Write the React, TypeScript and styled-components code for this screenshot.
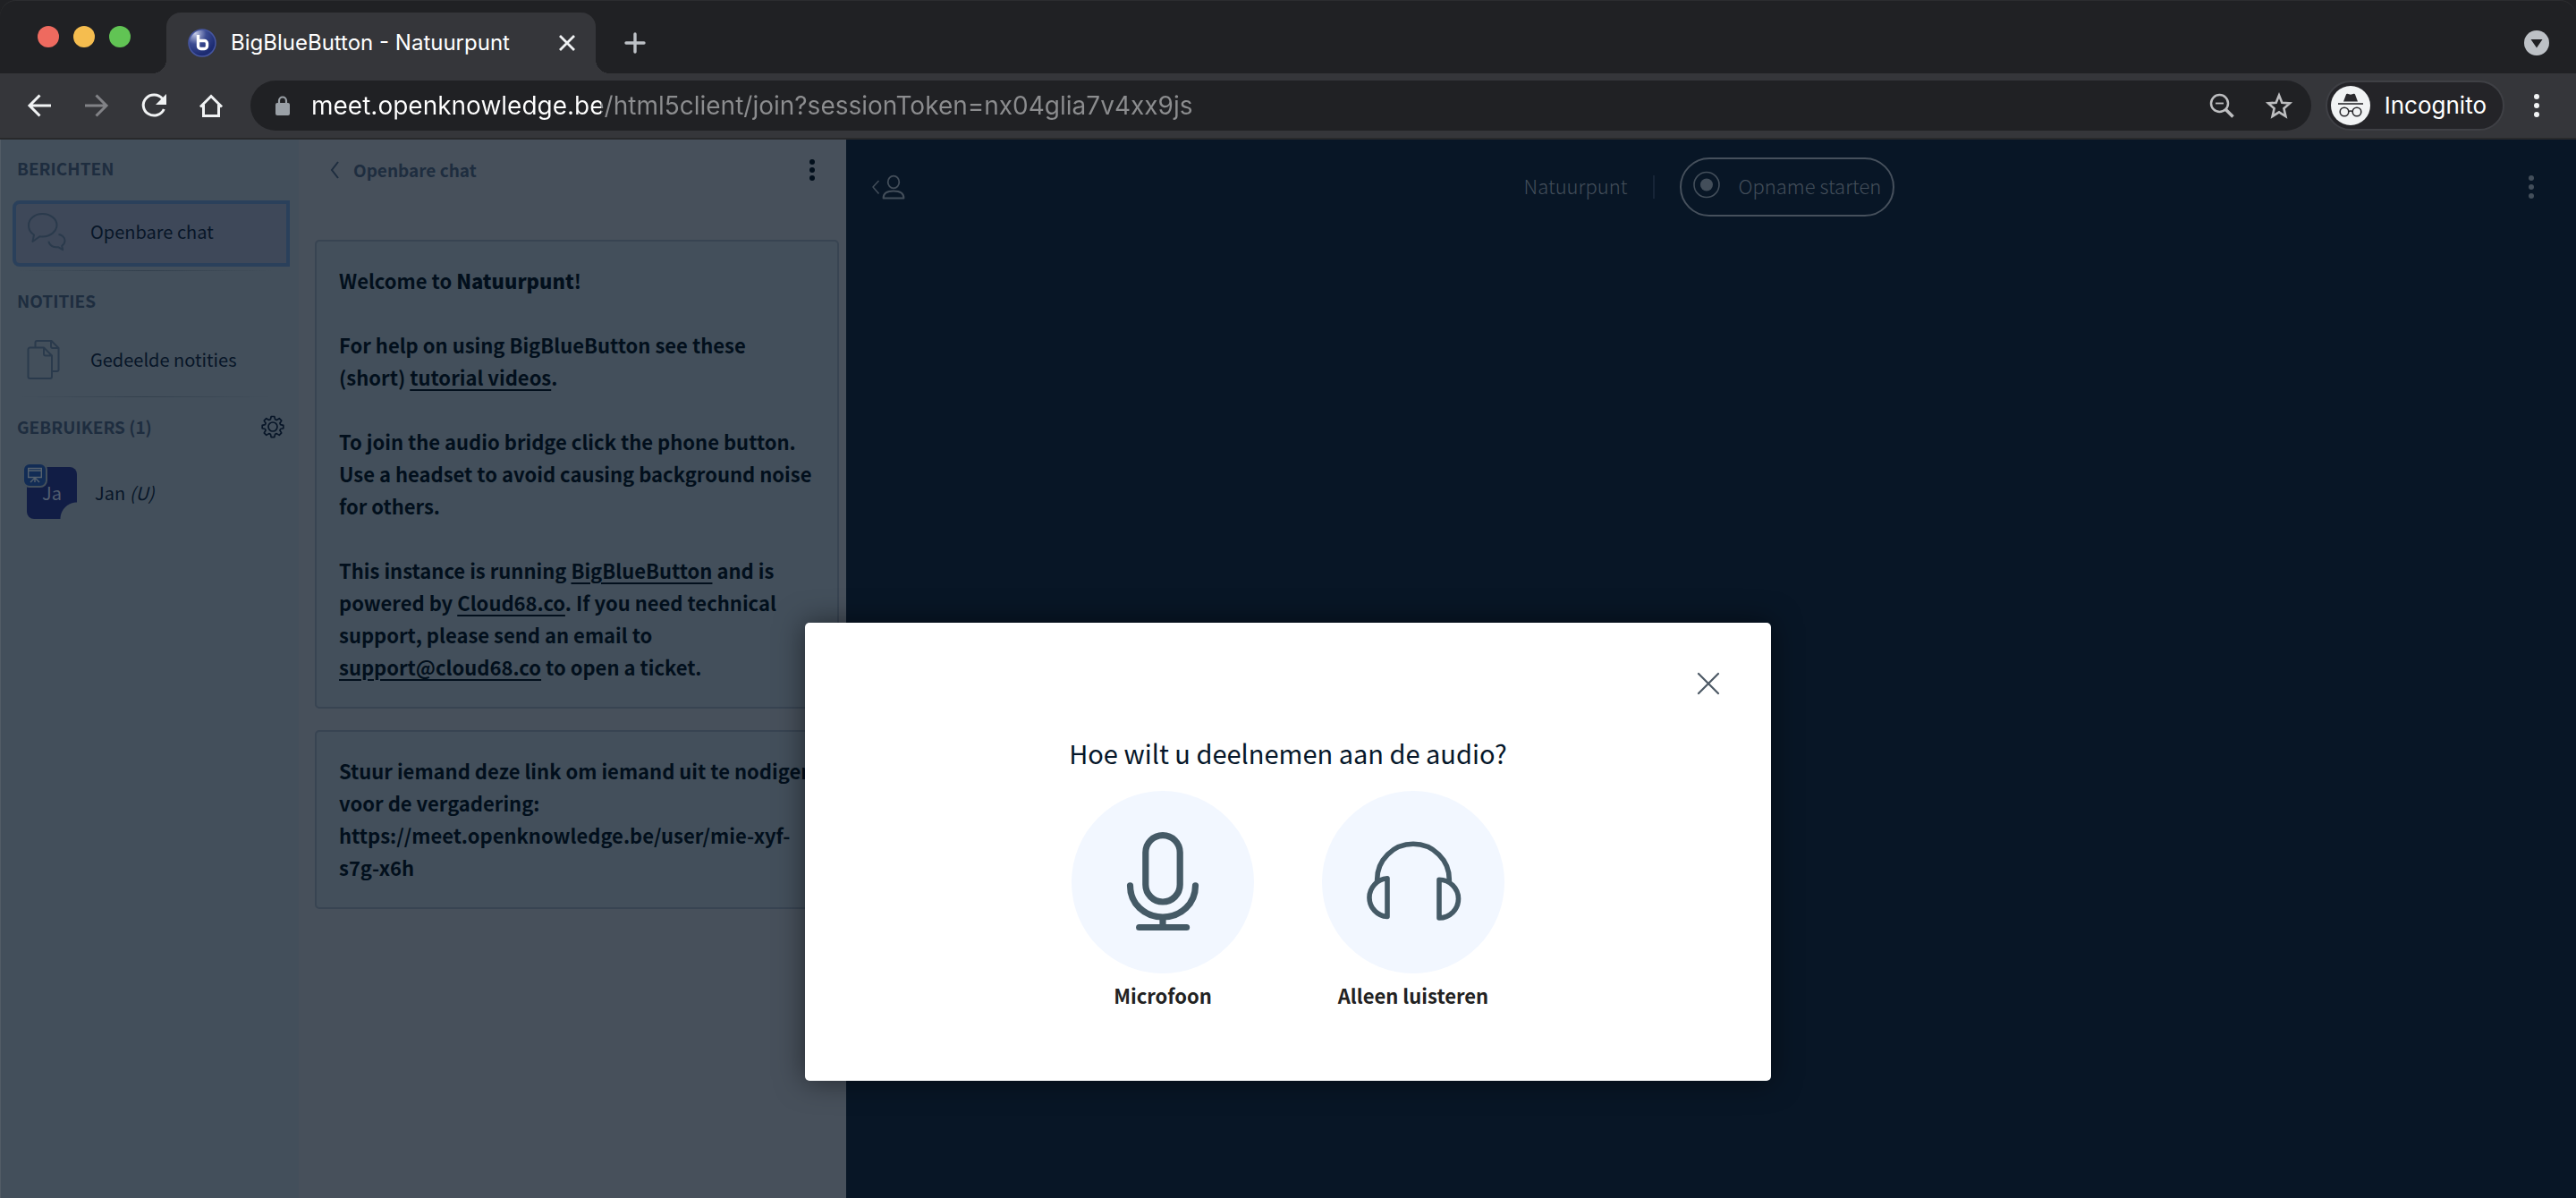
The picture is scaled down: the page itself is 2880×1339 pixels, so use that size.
import React from 'react';
import styled, { createGlobalStyle, css } from 'styled-components';

const sans = `"Noto Sans CJK SC", "Noto Sans", sans-serif`;
const chromeFont = `Inter, Roboto, sans-serif`;

const GlobalStyle = createGlobalStyle`
  *, *::before, *::after { box-sizing: border-box; }
  body { margin: 0; background: #202124; font-family: ${sans}; }
  button, input { font: inherit; color: inherit; }
  h1, h2, p { margin: 0; font-weight: inherit; }
  svg { display: block; flex: none; }
`;

const plainButton = css`
  display: flex;
  align-items: center;
  justify-content: center;
  padding: 0;
  border: 0;
  background: none;
  cursor: pointer;
`;

const Window = styled.div`
  display: flex;
  flex-direction: column;
  min-height: 100vh;
  overflow: hidden;
`;

/* ---------- browser chrome ---------- */

const TabStrip = styled.header`
  display: flex;
  align-items: stretch;
  height: 82px;
  padding: 14px 30px 0 42px;
  background: #202124;
  border-radius: 18px 18px 0 0;
  box-shadow: inset 0 1px 0 #2c2d30;
`;

const TrafficLights = styled.div`
  display: flex;
  gap: 16px;
  width: 144px;
  padding-top: 15px;
`;

const Light = styled.button<{ $color: string }>`
  ${plainButton}
  width: 24px;
  height: 24px;
  border-radius: 50%;
  background: ${(p) => p.$color};
`;

const Tab = styled.div`
  position: relative;
  display: flex;
  align-items: center;
  width: 480px;
  padding: 0 22px 0 24px;
  border-radius: 16px 16px 0 0;
  background: #35363a;
  color: #fff;

  &::before, &::after {
    content: '';
    position: absolute;
    bottom: 0;
    width: 16px;
    height: 16px;
  }
  &::before {
    right: 100%;
    background: radial-gradient(circle at 0 0, transparent 16px, #35363a 16px);
  }
  &::after {
    left: 100%;
    background: radial-gradient(circle at 100% 0, transparent 16px, #35363a 16px);
  }
`;

const TabTitle = styled.span`
  flex: 1;
  margin-left: 16px;
  font: 400 24px/32px ${chromeFont};
  white-space: nowrap;
`;

const IconButton = styled.button<{ $size?: number; $color?: string }>`
  ${plainButton}
  width: ${(p) => p.$size ?? 32}px;
  height: ${(p) => p.$size ?? 32}px;
  color: ${(p) => p.$color ?? '#f1f3f4'};
`;

const NewTab = styled(IconButton)`
  align-self: center;
  margin: 0 auto 0 28px;
`;

const TabSearch = styled(IconButton)`
  align-self: center;
`;

const Toolbar = styled.div`
  display: flex;
  align-items: center;
  height: 74px;
  padding: 0 28px;
  background: #35363a;
  border-bottom: 2px solid #28292b;
`;

const NavButtons = styled.nav`
  display: flex;
  gap: 32px;
  margin-right: 28px;
`;

const Omnibox = styled.form`
  flex: 1;
  display: flex;
  align-items: center;
  height: 56px;
  padding: 0 20px 0 24px;
  border-radius: 28px;
  background: #202124;
`;

const UrlInput = styled.input`
  flex: 1;
  height: 56px;
  margin-left: 20px;
  padding: 0;
  border: 0;
  outline: 0;
  font: 400 28px/56px ${chromeFont};
  color: #fff;
  background: linear-gradient(to right, #fff 324px, #8c8d8f 324px);
  -webkit-background-clip: text;
  background-clip: text;
  -webkit-text-fill-color: transparent;
`;

const OmniActions = styled.div`
  display: flex;
  gap: 32px;
`;

const IncognitoPill = styled.button`
  ${plainButton}
  gap: 16px;
  height: 56px;
  margin: 0 20px 0 16px;
  padding: 0 18px 0 4px;
  border: 2px solid #3f4045;
  border-radius: 28px;
  background: #242428;
  font: 400 26px/32px ${chromeFont};
  color: #fff;
`;

/* ---------- meeting ---------- */

const Page = styled.main`
  position: relative;
  flex: 1;
  display: grid;
  grid-template-columns: 334px 612px 1fr;
  background: #081626;
`;

const UserPanel = styled.aside`
  padding: 16px 10px 0 13px;
  border-left: 1px solid #525c66;
  background: #434f5b;
  color: #081628;
`;

const Section = styled.section<{ $divider?: boolean }>`
  padding-bottom: 17px;

  &::after {
    content: '';
    display: ${(p) => (p.$divider ? 'block' : 'none')};
    height: 1px;
    margin: 4px 20px 0 6px;
    background: linear-gradient(to right, transparent, #33404d, transparent);
  }
`;

const SectionHead = styled.div`
  display: flex;
  align-items: center;
  justify-content: space-between;
  height: 32px;
  padding: 0 6px 0 5px;
  color: #1e2d3f;
`;

const SectionTitle = styled.h2`
  font: 700 19px/32px ${sans};
`;

const ListItem = styled.button<{ $active?: boolean }>`
  ${plainButton}
  justify-content: flex-start;
  width: 310px;
  height: ${(p) => (p.$active ? 74 : 70)}px;
  padding: 0 0 4px 12px;
  border: 4px solid ${(p) => (p.$active ? '#2a405b' : 'transparent')};
  border-radius: 8px 0 0 8px;
  background: ${(p) => (p.$active ? '#3e4859' : 'none')};
  font: 400 20px/32px ${sans};
`;

const ItemIcon = styled.span`
  width: 71px;
  color: #2a3a4c;
`;

const MessagesList = styled.div`
  padding-top: 20px;
`;

const NotesList = styled.div`
  padding-top: 17px;
`;

const UserRow = styled.div`
  display: flex;
  align-items: center;
  gap: 20px;
  height: 58px;
  margin-top: 29px;
  padding-left: 16px;
  font: 400 20px/32px ${sans};
`;

const Avatar = styled.div`
  position: relative;
  display: flex;
  align-items: center;
  justify-content: center;
  width: 56px;
  height: 58px;
  border-radius: 8px 8px 0 8px;
  background: radial-gradient(circle at 100% 100%, transparent 18px, #111d45 19px);
  color: #525d70;
`;

const PresenterBadge = styled.span`
  position: absolute;
  top: -5px;
  left: -5px;
  display: flex;
  align-items: center;
  justify-content: center;
  width: 28px;
  height: 28px;
  border: 2px solid #434f5b;
  border-radius: 8px;
  background: #122c55;
  color: #55616e;
`;

const ChatPanel = styled.section`
  padding: 18px 8px 0 18px;
  background: #47505b;
  color: #020f1c;
`;

const ChatHeader = styled.header`
  display: flex;
  align-items: center;
  justify-content: space-between;
  height: 32px;
  margin-bottom: 62px;
  padding: 0 14px 0 14px;
`;

const BackToList = styled.button`
  ${plainButton}
  gap: 13px;
  font: 700 19px/32px ${sans};
  color: #1e2d3f;
`;

const Message = styled.article`
  margin-bottom: 24px;
  padding: 25px 26px 27px 25px;
  border: 2px solid #384452;
  border-radius: 5px;
  background: #434f5b;
  font: 700 22px/36px ${sans};
  overflow-wrap: break-word;

  p + p { margin-top: 36px; }
  b { font-weight: 900; }
  a { color: inherit; text-decoration-thickness: 2px; text-underline-offset: 4px; }
`;

const Stage = styled.section`
  display: flex;
  justify-content: space-between;
  align-items: flex-start;
  padding: 20px 40px 0 28px;
  color: #434e5a;
`;

const StageTitle = styled.div`
  display: flex;
  align-items: center;
  height: 66px;
  font: 300 22px/36px ${sans};
`;

const MeetingName = styled.span`
  padding-bottom: 4px;
`;

const Separator = styled.span`
  width: 2px;
  height: 26px;
  margin: 0 28px;
  background: #172537;
`;

const RecordButton = styled.button`
  ${plainButton}
  gap: 20px;
  height: 66px;
  padding: 0 13px 4px 12px;
  border: 2px solid #46505c;
  border-radius: 33px;
`;

const StageButton = styled.button`
  ${plainButton}
  justify-content: flex-end;
  min-width: 32px;
  height: 66px;
  color: #434e5a;
`;

/* ---------- audio dialog ---------- */

const Overlay = styled.div`
  position: absolute;
  inset: 0;
  display: flex;
  justify-content: center;
  align-items: flex-start;
  padding-top: 540px;
`;

const Dialog = styled.section`
  width: 1080px;
  padding: 48px 50px 78px;
  border-radius: 5px;
  background: #fff;
  box-shadow: 0 0 32px rgba(0, 0, 0, 0.5);
`;

const DialogTop = styled.div`
  display: flex;
  justify-content: flex-end;
`;

const DialogTitle = styled.h1`
  margin: 33px 0 19px;
  text-align: center;
  font: 400 29px/48px ${sans};
  color: #06172a;
`;

const Choices = styled.div`
  display: flex;
  justify-content: center;
  gap: 76px;
`;

const Choice = styled.button`
  ${plainButton}
  flex-direction: column;
  width: 204px;
  font: 700 22px/36px ${sans};
  color: #222;
  white-space: nowrap;
`;

const Disc = styled.span`
  display: flex;
  align-items: center;
  justify-content: center;
  width: 204px;
  height: 204px;
  margin-bottom: 6px;
  border-radius: 50%;
  background: #f2f7ff;
  color: #455a66;
`;

/* ---------- icons ---------- */

type DotsProps = { gap: number; r: number };
const Dots = ({ gap, r }: DotsProps) => (
  <svg width="20" height="32" viewBox="0 0 20 32" fill="currentColor" aria-hidden="true">
    <circle cx="10" cy={16 - gap} r={r} />
    <circle cx="10" cy="16" r={r} />
    <circle cx="10" cy={16 + gap} r={r} />
  </svg>
);

const Favicon = () => (
  <svg width="32" height="32" viewBox="0 0 32 32" aria-hidden="true">
    <defs>
      <radialGradient id="fav" cx="0.25" cy="0.15" r="0.8">
        <stop offset="0" stopColor="#c5cbe6" />
        <stop offset="0.5" stopColor="#3c4c92" />
        <stop offset="1" stopColor="#1d2c72" />
      </radialGradient>
    </defs>
    <circle cx="16" cy="16" r="15" fill="url(#fav)" stroke="#4656a0" strokeWidth="1.5" />
    <path d="M11.500 7v12.500a3 3 0 0 0 3 3h4a3 3 0 0 0 3-3v-3a3 3 0 0 0-3-3h-7" fill="none" stroke="#fff" strokeWidth="3.400" />
  </svg>
);

const BackArrow = () => (
  <svg width="32" height="32" viewBox="0 0 32 32" fill="none" stroke="currentColor" strokeWidth="3" aria-hidden="true">
    <path d="M29 16H5M16.500 4.500 5 16l11.500 11.500" />
  </svg>
);

const ForwardArrow = () => (
  <svg width="32" height="32" viewBox="0 0 32 32" fill="none" stroke="currentColor" strokeWidth="3" aria-hidden="true">
    <path d="M3 16h24M15.500 4.500 27 16 15.500 27.500" />
  </svg>
);

const Reload = () => (
  <svg width="32" height="32" viewBox="0 0 32 32" aria-hidden="true">
    <path d="M25.500 8.200A12 11.500 0 1 0 27.300 20" fill="none" stroke="currentColor" strokeWidth="3" />
    <path d="M30 3v12H18z" fill="currentColor" />
  </svg>
);

const Home = () => (
  <svg width="32" height="32" viewBox="0 0 32 32" fill="none" stroke="currentColor" strokeWidth="3" aria-hidden="true">
    <path d="M4 17.500 16 5.500l12 12M7.500 15v12.500h17V15" />
  </svg>
);

const Lock = () => (
  <svg width="24" height="24" viewBox="0 0 24 24" aria-hidden="true">
    <rect x="4" y="9" width="16" height="14" rx="2" fill="#9aa0a6" />
    <path d="M8 10V6.500a4 4 0 0 1 8 0V10" fill="none" stroke="#9aa0a6" strokeWidth="2.200" />
  </svg>
);

const ZoomOut = () => (
  <svg width="32" height="32" viewBox="0 0 32 32" fill="none" stroke="currentColor" strokeWidth="2.500" aria-hidden="true">
    <circle cx="13.500" cy="13.500" r="9.500" />
    <path d="M9 13.500h9" strokeWidth="1.800" />
    <path d="m20 20 8.500 8.500" strokeWidth="3.500" />
  </svg>
);

const Star = () => (
  <svg width="32" height="32" viewBox="0 0 32 32" fill="none" stroke="currentColor" strokeWidth="2.600" aria-hidden="true">
    <path d="m16 4.500 3.300 8.200 8.700.7-6.600 5.800 2 8.800L16 23.400 8.600 28l2-8.800L4 13.400l8.700-.7z" />
  </svg>
);

const Incognito = () => (
  <svg width="44" height="44" viewBox="0 0 44 44" aria-hidden="true">
    <circle cx="22" cy="22" r="22" fill="#f1f3f4" />
    <path d="M14 17.500 17 9.500q.4-1 1.500-.7L22 9.800l3.500-1q1.100-.3 1.500.7l3 8z" fill="#2a2a2e" />
    <path d="M8 20h28" stroke="#2a2a2e" strokeWidth="1.600" />
    <g fill="none" stroke="#2a2a2e" strokeWidth="1.600">
      <circle cx="15" cy="29" r="4.800" />
      <circle cx="29" cy="29" r="4.800" />
      <path d="M19.500 28.500q2.500-1 5 0" />
    </g>
  </svg>
);

const Bubbles = () => (
  <svg width="44" height="44" viewBox="0 0 44 44" fill="none" stroke="currentColor" strokeWidth="2" strokeLinejoin="round" aria-hidden="true">
    <path d="M6.500 33 8 25.500C4 23 2 19 2 14.800 2 7.500 8.800 2 17.500 2S33.500 7.500 33.500 14.500 26.500 27.500 17.500 27.500q-1.500 0-3-.3z" />
    <path d="M35.500 25c4 .5 7 3.500 7 7 0 2.500-1.200 4.200-3.300 5.700l1 4.500-5.200-3C29.500 40 24.800 37 24.500 32.800" />
  </svg>
);

const Papers = () => (
  <svg width="38" height="46" viewBox="0 0 38 46" fill="none" stroke="currentColor" strokeWidth="2" strokeLinejoin="round" aria-hidden="true">
    <path d="M9.500 9.500V4a2 2 0 0 1 2-2h16l8 8v24a2 2 0 0 1-2 2h-4.500M27 2.500V8a2 2 0 0 0 2 2h6" />
    <path d="M3.500 9.500h15.500l9 9V42a2 2 0 0 1-2 2H3.500a2 2 0 0 1-2-2V11.500a2 2 0 0 1 2-2zM19 10v6.500a2 2 0 0 0 2 2h6.500" />
  </svg>
);

const Gear = () => (
  <svg width="26" height="26" viewBox="-13 -13 26 26" fill="none" stroke="currentColor" strokeWidth="1.700" strokeLinejoin="round" aria-hidden="true">
    <circle r="5" />
    <path d="M-1.800-11.500h3.600l.8 3.300 1.700.7 2.900-1.800 2.500 2.500L7.900-4l.7 1.600 3.200.8v3.300l-3.200.8L7.900 4l1.800 2.900-2.500 2.500-2.900-1.800-1.700.7-.8 3.300h-3.600l-.8-3.300-1.700-.7-2.900 1.800-2.500-2.500L-7.900 4l-.7-1.500-3.200-.8v-3.300l3.200-.8.7-1.600-1.800-2.800 2.500-2.500 2.900 1.800 1.700-.7z" />
  </svg>
);

const Screen = () => (
  <svg width="18" height="18" viewBox="0 0 18 18" fill="none" stroke="currentColor" strokeWidth="1.400" aria-hidden="true">
    <path d="M1 1.500h16M1.700 1.500v10h14.600v-10M1.700 4h14.600M9 11.500V17M8.500 12.500 4 17M9.500 12.500 14 17" />
  </svg>
);

const ChevronLeft = () => (
  <svg width="16" height="24" viewBox="0 0 16 24" fill="none" stroke="currentColor" strokeWidth="2" aria-hidden="true">
    <path d="M12 3 5 12l7 9" />
  </svg>
);

const UsersToggle = () => (
  <svg width="40" height="32" viewBox="0 0 40 32" fill="none" stroke="currentColor" strokeWidth="1.800" strokeLinejoin="round" aria-hidden="true">
    <path d="m8.500 9-6.500 7 6.500 7.500" strokeWidth="1.500" />
    <ellipse cx="25" cy="10.500" rx="6.300" ry="6.800" />
    <path d="M13.500 28.500c0-5 4-8 11.500-8s11.500 3 11.500 8z" />
  </svg>
);

const RecordDot = () => (
  <svg width="32" height="32" viewBox="0 0 32 32" aria-hidden="true">
    <circle cx="16" cy="15.500" r="14" fill="none" stroke="currentColor" strokeWidth="1.600" />
    <circle cx="16" cy="15.500" r="7" fill="currentColor" />
  </svg>
);

const Mic = () => (
  <svg width="84" height="112" viewBox="0 0 84 112" fill="none" stroke="currentColor" strokeWidth="7.200" aria-hidden="true">
    <rect x="22.800" y="3.600" width="38.400" height="74.400" rx="19.200" />
    <path d="M5.500 59.800C5.500 80 21.500 95 42 95s36.500-15 36.500-35.200M15.600 106.500h53" strokeLinecap="round" />
    <path d="M42 95v11" />
  </svg>
);

const Headphones = () => (
  <svg width="108" height="92" viewBox="0 0 108 92" fill="none" stroke="currentColor" strokeWidth="5.600" strokeLinejoin="round" aria-hidden="true">
    <path d="M13.700 46v-3a40.300 39.700 0 0 1 80.600 0v3" />
    <path d="M25 41.800V84.500A21.500 21.400 0 0 1 25 41.800z" />
    <path d="M83 43.200V86A21.500 21.400 0 0 0 83 43.200z" />
  </svg>
);

const CloseThin = () => (
  <svg width="26" height="26" viewBox="0 0 26 26" stroke="currentColor" strokeWidth="2.200" strokeLinecap="round" aria-hidden="true">
    <path d="m2 2 22 22M24 2 2 24" />
  </svg>
);

/* ---------- app ---------- */

export default function App() {
  return (
    <Window>
      <GlobalStyle />
      <TabStrip>
        <TrafficLights>
          <Light $color="#ee6a5f" aria-label="Close window" />
          <Light $color="#f5bd4f" aria-label="Minimise window" />
          <Light $color="#61c454" aria-label="Full screen" />
        </TrafficLights>
        <Tab>
          <Favicon />
          <TabTitle>BigBlueButton - Natuurpunt</TabTitle>
          <IconButton $size={20} aria-label="Close tab">
            <svg width="20" height="20" viewBox="0 0 20 20" stroke="currentColor" strokeWidth="2.800" aria-hidden="true">
              <path d="m2 2 16 16M18 2 2 18" />
            </svg>
          </IconButton>
        </Tab>
        <NewTab $color="#bdc1c6" aria-label="New tab">
          <svg width="24" height="24" viewBox="0 0 24 24" stroke="currentColor" strokeWidth="3.400" strokeLinecap="round" aria-hidden="true">
            <path d="M12 2v20M2 12h20" />
          </svg>
        </NewTab>
        <TabSearch $size={28} $color="#bdc1c6" aria-label="Search tabs">
          <svg width="28" height="28" viewBox="0 0 28 28" aria-hidden="true">
            <circle cx="14" cy="14" r="14" fill="currentColor" />
            <path d="M7.500 10h13L14 19.500z" fill="#202124" />
          </svg>
        </TabSearch>
      </TabStrip>

      <Toolbar>
        <NavButtons aria-label="Navigation">
          <IconButton aria-label="Back"><BackArrow /></IconButton>
          <IconButton $color="#818286" aria-label="Forward"><ForwardArrow /></IconButton>
          <IconButton aria-label="Reload"><Reload /></IconButton>
          <IconButton aria-label="Home"><Home /></IconButton>
        </NavButtons>
        <Omnibox>
          <Lock />
          <UrlInput
            aria-label="Address"
            defaultValue="meet.openknowledge.be/html5client/join?sessionToken=nx04glia7v4xx9js"
          />
          <OmniActions>
            <IconButton type="button" $color="#bdbec0" aria-label="Zoom"><ZoomOut /></IconButton>
            <IconButton type="button" $color="#bdbec0" aria-label="Bookmark"><Star /></IconButton>
          </OmniActions>
        </Omnibox>
        <IncognitoPill><Incognito />Incognito</IncognitoPill>
        <IconButton aria-label="Menu"><Dots gap={10} r={3} /></IconButton>
      </Toolbar>

      <Page>
        <UserPanel>
          <Section $divider>
            <SectionHead><SectionTitle>BERICHTEN</SectionTitle></SectionHead>
            <MessagesList>
              <ListItem $active><ItemIcon><Bubbles /></ItemIcon>Openbare chat</ListItem>
            </MessagesList>
          </Section>
          <Section $divider>
            <SectionHead><SectionTitle>NOTITIES</SectionTitle></SectionHead>
            <NotesList>
              <ListItem><ItemIcon><Papers /></ItemIcon>Gedeelde notities</ListItem>
            </NotesList>
          </Section>
          <Section>
            <SectionHead>
              <SectionTitle>GEBRUIKERS (1)</SectionTitle>
              <IconButton $size={26} $color="#081628" aria-label="Gebruikers beheren"><Gear /></IconButton>
            </SectionHead>
            <UserRow>
              <Avatar>
                <PresenterBadge><Screen /></PresenterBadge>
                Ja
              </Avatar>
              <span>Jan <i>(U)</i></span>
            </UserRow>
          </Section>
        </UserPanel>

        <ChatPanel>
          <ChatHeader>
            <BackToList><ChevronLeft />Openbare chat</BackToList>
            <IconButton $size={32} $color="#020f1c" aria-label="Chatopties"><Dots gap={9} r={3} /></IconButton>
          </ChatHeader>
          <Message>
            <p>Welcome to <b>Natuurpunt</b>!</p>
            <p>For help on using BigBlueButton see these (short) <a href="#videos">tutorial videos</a>.</p>
            <p>To join the audio bridge click the phone button. Use a headset to avoid causing background noise for others.</p>
            <p>
              This instance is running <a href="#bbb">BigBlueButton</a> and is powered by <a href="#cloud68">Cloud68.co</a>. If
              you need technical support, please send an email to <a href="#support">support@cloud68.co</a> to open a ticket.
            </p>
          </Message>
          <Message>
            Stuur iemand deze link om iemand uit te nodigen voor de vergadering: https://meet.openknowledge.be/user/mie-xyf-s7g-x6h
          </Message>
        </ChatPanel>

        <Stage>
          <StageButton aria-label="Gebruikerslijst"><UsersToggle /></StageButton>
          <StageTitle>
            <MeetingName>Natuurpunt</MeetingName>
            <Separator />
            <RecordButton><RecordDot />Opname starten</RecordButton>
          </StageTitle>
          <StageButton aria-label="Opties"><Dots gap={10} r={3} /></StageButton>
        </Stage>

        <Overlay>
          <Dialog role="dialog" aria-labelledby="audio-title">
            <DialogTop>
              <IconButton $size={40} $color="#4e5a66" aria-label="Sluiten"><CloseThin /></IconButton>
            </DialogTop>
            <DialogTitle id="audio-title">Hoe wilt u deelnemen aan de audio?</DialogTitle>
            <Choices>
              <Choice><Disc><Mic /></Disc>Microfoon</Choice>
              <Choice><Disc><Headphones /></Disc>Alleen luisteren</Choice>
            </Choices>
          </Dialog>
        </Overlay>
      </Page>
    </Window>
  );
}
